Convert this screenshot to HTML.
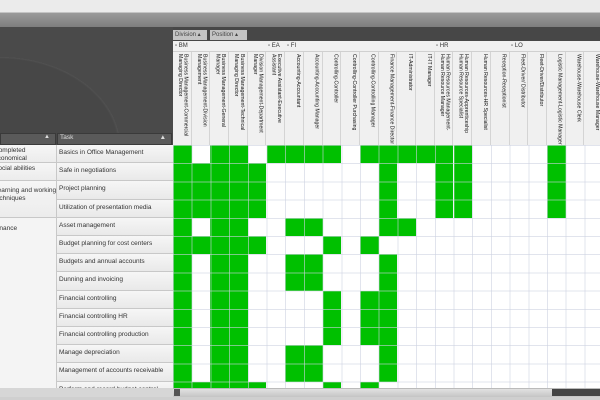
<!DOCTYPE html>
<html><head><meta charset="utf-8"><style>
*{margin:0;padding:0;box-sizing:border-box}
body{width:600px;height:400px;overflow:hidden;position:relative;background:#e9e9e9;font-family:"Liberation Sans",sans-serif}
.a{position:absolute}
.g{position:absolute;background:#00c000;left:calc(173px + var(--c)*18.7px);top:calc(145px + var(--r)*18.2px);width:18.7px;height:calc(var(--n)*18.2px)}
.hd{position:absolute;top:52px;width:18.7px;height:93px;border-right:1px solid #d4d4d4;writing-mode:vertical-rl;font-size:5.2px;line-height:5.6px;color:#111;padding:2px 3px 0 0;overflow:hidden}
.lr{position:absolute;left:0;width:173px;border-bottom:1px solid #c8c8c8;background:linear-gradient(#f6f6f6,#e9e9e9);font-size:6.5px;color:#333}
.lr span{position:absolute;top:4px;left:59px;white-space:nowrap}
.grp{position:absolute;left:0;width:57px;border-bottom:1px solid #c8c8c8;border-right:1px solid #c8c8c8;background:linear-gradient(#f6f6f6,#ececec);font-size:6.5px;color:#333;overflow:hidden;line-height:8px}
.grp span{position:absolute;left:-6px;top:2px;width:64px}
</style></head><body>
<div class="a" style="left:0;top:0;width:600px;height:12px;background:#ebebeb"></div>
<div class="a" style="left:0;top:12px;width:600px;height:15px;background:linear-gradient(#9a9a9a,#7e7e7e);border-top:1px solid #c4c4c4"></div>
<div class="a" style="left:0;top:27px;width:600px;height:14px;background:#474747"></div>
<div class="a" style="left:0;top:27px;width:173px;height:118px;background:radial-gradient(ellipse 120px 90px at 0px 120px,#474747 98%,#525252 100%,#4a4a4a)"></div>
<div class="a" style="left:173px;top:30px;width:34px;height:10px;background:#c4c4c4;font-size:6px;color:#444;padding:1px 2px">Division ▴</div>
<div class="a" style="left:210px;top:30px;width:37px;height:10px;background:#c4c4c4;font-size:6px;color:#444;padding:1px 2px">Position ▴</div>
<div class="a" style="left:173px;top:41px;width:427px;height:104px;background:#f0f0f0"></div>
<div class="a" style="left:173px;top:41px;width:427px;height:11px;border-bottom:1px solid #d0d0d0"></div>
<div class="a" style="left:175px;top:43px;font-size:6px;color:#333">▫ BM</div>
<div class="a" style="left:268px;top:43px;font-size:6px;color:#333">▫ EA</div>
<div class="a" style="left:287px;top:43px;font-size:6px;color:#333">▫ FI</div>
<div class="a" style="left:436px;top:43px;font-size:6px;color:#333">▫ HR</div>
<div class="a" style="left:511px;top:43px;font-size:6px;color:#333">▫ LO</div>
<div class="hd" style="left:173px">Business Management-Commercial Managing Director</div>
<div class="hd" style="left:191.7px">Business Management-Division Management</div>
<div class="hd" style="left:210.4px">Business Management-General Manager</div>
<div class="hd" style="left:229.1px">Business Management-Technical Managing Director</div>
<div class="hd" style="left:247.8px">Division Management-Department Manager</div>
<div class="hd" style="left:266.5px">Executive Assistant-Executive Assistant</div>
<div class="hd" style="left:285.2px">Accounting-Accountant</div>
<div class="hd" style="left:303.9px">Accounting-Accounting Manager</div>
<div class="hd" style="left:322.6px">Controlling-Controller</div>
<div class="hd" style="left:341.3px">Controlling-Controller Purchasing</div>
<div class="hd" style="left:360px">Controlling-Controlling Manager</div>
<div class="hd" style="left:378.7px">Finance Management-Finance Director</div>
<div class="hd" style="left:397.4px">IT-Administrator</div>
<div class="hd" style="left:416.1px">IT-IT Manager</div>
<div class="hd" style="left:434.8px">Human Resources Management-Human Resource Manager</div>
<div class="hd" style="left:453.5px">Human Resources-Apprenticeship Human Resource Specialist</div>
<div class="hd" style="left:472.2px">Human Resources-HR Specialist</div>
<div class="hd" style="left:490.9px">Reception-Receptionist</div>
<div class="hd" style="left:509.6px">Fleet-Driver/ Distributor</div>
<div class="hd" style="left:528.3px">Fleet-Driver/Distributor</div>
<div class="hd" style="left:547px">Logistic Management-Logistic Manager</div>
<div class="hd" style="left:565.7px">Warehouse-Warehouse Clerk</div>
<div class="hd" style="left:584.4px">Warehouse-Warehouse Manager</div>

<div class="a" style="left:0;top:133px;width:56px;height:12px;background:#5a5a5a;border:1px solid #3a3a3a;font-size:6px;color:#ddd;text-align:right;padding-right:5px">▲</div>
<div class="a" style="left:57px;top:133px;width:115px;height:12px;background:#5a5a5a;border:1px solid #3a3a3a;font-size:6.5px;color:#ddd;padding-left:2px">Task<span style="position:absolute;right:5px">▲</span></div>

<div class="lr" style="top:145px;height:18.2px"><span>Basics in Office Management</span></div>
<div class="lr" style="top:163.2px;height:18.2px"><span>Safe in negotiations</span></div>
<div class="lr" style="top:181.4px;height:18.2px"><span>Project planning</span></div>
<div class="lr" style="top:199.6px;height:18.2px"><span>Utilization of presentation media</span></div>
<div class="lr" style="top:217.8px;height:18.2px"><span>Asset management</span></div>
<div class="lr" style="top:236px;height:18.2px"><span>Budget planning for cost centers</span></div>
<div class="lr" style="top:254.2px;height:18.2px"><span>Budgets and annual accounts</span></div>
<div class="lr" style="top:272.4px;height:18.2px"><span>Dunning and invoicing</span></div>
<div class="lr" style="top:290.6px;height:18.2px"><span>Financial controlling</span></div>
<div class="lr" style="top:308.8px;height:18.2px"><span>Financial controlling HR</span></div>
<div class="lr" style="top:327px;height:18.2px"><span>Financial controlling production</span></div>
<div class="lr" style="top:345.2px;height:18.2px"><span>Manage depreciation</span></div>
<div class="lr" style="top:363.4px;height:18.2px"><span>Management of accounts receivable</span></div>
<div class="lr" style="top:381.6px;height:18.2px"><span>Perform and record budget control</span></div>
<div class="a" style="left:56px;top:145px;width:1px;height:245px;background:#c8c8c8"></div>
<div class="grp" style="top:145px;height:18.2px"><span>Completed economical apprenticeship</span></div>
<div class="grp" style="top:163.2px;height:18.2px"><span>Social abilities</span></div>
<div class="grp" style="top:181.4px;height:36.4px"><span style="top:6px">Learning and working techniques</span></div>
<div class="grp" style="top:217.8px;height:172px;background:#f4f4f4"><span style="top:7px">Finance</span></div>

<div class="a" style="left:173px;top:145px;width:427px;height:245px;background:#fff"></div>
<div class="g" style="--c:0;--r:0;--n:14"></div>
<div class="g" style="--c:1;--r:1;--n:3"></div><div class="g" style="--c:1;--r:5;--n:1"></div><div class="g" style="--c:1;--r:13;--n:1"></div>
<div class="g" style="--c:2;--r:0;--n:14"></div>
<div class="g" style="--c:3;--r:0;--n:14"></div>
<div class="g" style="--c:4;--r:1;--n:3"></div><div class="g" style="--c:4;--r:5;--n:1"></div><div class="g" style="--c:4;--r:13;--n:1"></div>
<div class="g" style="--c:5;--r:0;--n:1"></div>
<div class="g" style="--c:6;--r:0;--n:1"></div><div class="g" style="--c:6;--r:4;--n:1"></div><div class="g" style="--c:6;--r:6;--n:2"></div><div class="g" style="--c:6;--r:11;--n:2"></div>
<div class="g" style="--c:7;--r:0;--n:1"></div><div class="g" style="--c:7;--r:4;--n:1"></div><div class="g" style="--c:7;--r:6;--n:2"></div><div class="g" style="--c:7;--r:11;--n:2"></div>
<div class="g" style="--c:8;--r:0;--n:1"></div><div class="g" style="--c:8;--r:5;--n:1"></div><div class="g" style="--c:8;--r:8;--n:3"></div><div class="g" style="--c:8;--r:13;--n:1"></div>
<div class="g" style="--c:10;--r:0;--n:1"></div><div class="g" style="--c:10;--r:5;--n:1"></div><div class="g" style="--c:10;--r:8;--n:3"></div><div class="g" style="--c:10;--r:13;--n:1"></div>
<div class="g" style="--c:11;--r:0;--n:5"></div><div class="g" style="--c:11;--r:6;--n:7"></div>
<div class="g" style="--c:12;--r:0;--n:1"></div><div class="g" style="--c:12;--r:4;--n:1"></div>
<div class="g" style="--c:13;--r:0;--n:1"></div>
<div class="g" style="--c:14;--r:0;--n:4"></div>
<div class="g" style="--c:15;--r:0;--n:4"></div>
<div class="g" style="--c:20;--r:0;--n:4"></div>
<div class="a" style="left:173px;top:145px;width:427px;height:245px;background:repeating-linear-gradient(90deg,rgba(205,210,225,.6) 0 1px,transparent 1px 18.7px),repeating-linear-gradient(180deg,rgba(205,210,225,.6) 0 1px,transparent 1px 18.2px)"></div>

<div class="a" style="left:0;top:388px;width:173px;height:9px;background:#d6d6d6"></div>
<div class="a" style="left:173px;top:388px;width:427px;height:9px;background:linear-gradient(#e2e2e2,#c4c4c4);border-top:1px solid #bbb"></div>
<div class="a" style="left:174px;top:389px;width:6px;height:7px;background:#555"></div>
<div class="a" style="left:552px;top:389px;width:48px;height:7px;background:#444"></div>
<div class="a" style="left:0;top:397px;width:600px;height:3px;background:#cfcfcf"></div>
</body></html>
